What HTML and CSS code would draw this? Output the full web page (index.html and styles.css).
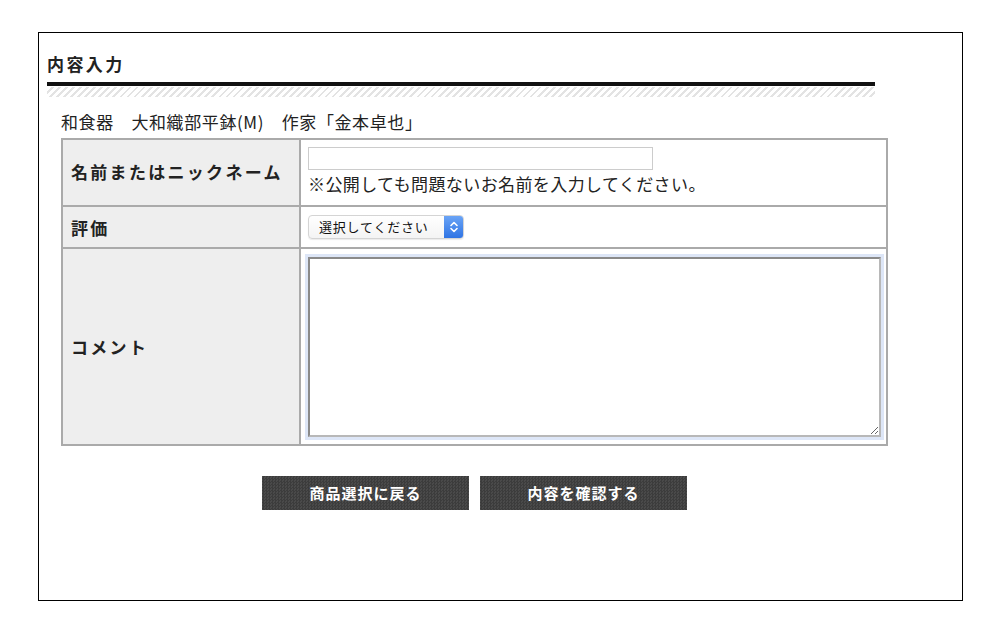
FILE: index.html
```html
<!DOCTYPE html>
<html lang="ja">
<head>
<meta charset="utf-8">
<link rel="stylesheet" href="styles.css">
</head>
<body>
<div class="panel">
  <h2 class="title">内容入力</h2>
  <div class="hatch"></div>
  <div class="form-area">
    <p class="product">和食器　大和織部平鉢(M)　作家「金本卓也」</p>
    <table class="form-table">
      <tr class="row-name">
        <th>名前またはニックネーム</th>
        <td>
          <input class="text-input" type="text">
          <div class="note">※公開しても問題ないお名前を入力してください。</div>
        </td>
      </tr>
      <tr class="row-rate">
        <th>評価</th>
        <td>
          <div class="select">
            <span class="select-label">選択してください</span>
            <span class="stepper">
              <svg width="10" height="14" viewBox="0 0 10 14"><path d="M2 5.5 L5 2.5 L8 5.5 M2 8.5 L5 11.5 L8 8.5" fill="none" stroke="#fff" stroke-width="1.6" stroke-linecap="round" stroke-linejoin="round"/></svg>
            </span>
          </div>
        </td>
      </tr>
      <tr class="row-comment">
        <th>コメント</th>
        <td><textarea class="comment"></textarea></td>
      </tr>
    </table>
    <div class="buttons">
      <button class="btn" type="button">商品選択に戻る</button>
      <button class="btn" type="button">内容を確認する</button>
    </div>
  </div>
</div>
</body>
</html>
```
FILE: styles.css
```css
html, body {
  margin: 0;
  padding: 0;
  background: #fff;
}
body {
  font-family: "Noto Sans CJK JP", "Noto Sans", sans-serif;
  color: #222;
  width: 1000px;
  height: 642px;
  overflow: hidden;
}
.panel {
  box-sizing: border-box;
  margin: 32px 0 0 38px;
  width: 925px;
  height: 569px;
  border: 1px solid #000;
  padding: 19px 0 0 8px;
}
.title {
  margin: 0;
  width: 828px;
  font-size: 17px;
  letter-spacing: 2.4px;
  font-weight: bold;
  line-height: 24px;
  padding-bottom: 6px;
  border-bottom: 4px solid #111;
  color: #222;
}
.hatch {
  width: 828px;
  height: 10px;
  margin-top: 1px;
  background: repeating-linear-gradient(135deg, #fff 0 3px, #e3e3e3 3px 5px);
}
.form-area {
  margin-left: 14px;
  width: 827px;
}
.product {
  margin: 15px 0 0 0;
  font-size: 17px;
  letter-spacing: 0.6px;
  line-height: 20px;
  height: 26px;
  color: #222;
}
.form-table {
  width: 827px;
  border-collapse: collapse;
  font-size: 17px;
}
.form-table th, .form-table td {
  border: 2px solid #aaa;
}
.form-table th {
  width: 228px;
  background: #eee;
  text-align: left;
  padding: 0 0 0 8px;
  font-weight: bold;
  letter-spacing: 2.3px;
  color: #222;
}
.form-table td {
  padding: 0 0 0 7px;
  vertical-align: middle;
}
.row-name { height: 67px; }
.row-rate { height: 42px; }
.row-comment { height: 197px; }
.row-name th { padding-bottom: 3px; }
.row-name td { padding-bottom: 4px; }
.text-input {
  display: block;
  box-sizing: border-box;
  width: 345px;
  height: 23px;
  margin: 0;
  border: 1px solid #ccc;
  padding: 0;
}
.note {
  margin-top: 3px;
  line-height: 22px;
  color: #222;
  letter-spacing: 0.4px;
}
.select {
  display: flex;
  box-sizing: border-box;
  width: 156px;
  height: 24px;
  border: 1px solid #d4d4d4;
  border-radius: 4px;
  background: linear-gradient(#fff, #f4f4f4);
  overflow: hidden;
  box-shadow: 0 1px 1px rgba(0,0,0,0.08);
}
.select-label {
  flex: 1;
  font-size: 13px;
  letter-spacing: 0.8px;
  line-height: 22px;
  padding-left: 10px;
  color: #111;
}
.stepper {
  width: 19px;
  display: flex;
  align-items: center;
  justify-content: center;
  background: linear-gradient(#6aa4f6, #2f74e4);
}
.comment {
  display: block;
  box-sizing: border-box;
  width: 573px;
  height: 180px;
  margin: 0;
  padding: 2px;
  border: 2px solid #8a8a8a;
  border-right-color: #b8b8b8;
  border-bottom-color: #b8b8b8;
  outline: none;
  box-shadow: 0 0 0 3px #dde6f7;
  background: #fff;
}
.buttons {
  display: flex;
  justify-content: center;
  gap: 11px;
  margin-top: 30px;
}
.btn {
  width: 207px;
  height: 34px;
  border: 0;
  padding: 0 0 2px 0;
  font-family: "Noto Sans CJK JP", "Noto Sans", sans-serif;
  font-size: 15px;
  letter-spacing: 1px;
  font-weight: bold;
  color: #fff;
  background-color: #444;
  background-image: repeating-conic-gradient(#3c3c3c 0 25%, #4a4a4a 0 50%);
  background-size: 3px 3px;
}
```
